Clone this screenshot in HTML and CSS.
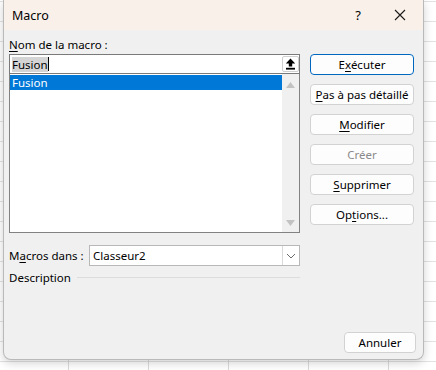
FILE: index.html
```html
<!DOCTYPE html>
<html lang="fr">
<head>
<meta charset="utf-8">
<title>Macro</title>
<link rel="stylesheet" href="styles.css">
</head>
<body>
<div class="dialog">
  <div class="titlebar">
    <span class="title">Macro</span>
    <span class="help">?</span>
    <span class="close"><svg width="12" height="12" viewBox="0 0 12 12"><path d="M1 1L11 11M11 1L1 11" stroke="#1a1a1a" stroke-width="1.1" fill="none"/></svg></span>
  </div>
  <div class="content">
    <div class="main">
      <div class="left">
        <div class="label"><u>N</u>om de la macro :</div>
        <div class="namebox">
          <span class="nametext"><span class="sel">Fusion</span><span class="caret"></span></span>
          <span class="upbtn"><svg width="11" height="12" viewBox="0 0 11 12"><path d="M5.5 0.5L0.8 5.6H3.8V8.6H7.2V5.6H10.2Z" fill="#000"/><rect x="1" y="9.8" width="9" height="1.8" fill="#000"/></svg></span>
        </div>
        <div class="list">
          <div class="items">
            <div class="item selected">Fusion</div>
          </div>
          <div class="scrollbar">
            <svg width="9" height="6" viewBox="0 0 9 6"><path d="M4.5 0L9 6H0Z" fill="#c2c2c2"/></svg>
            <svg width="9" height="6" viewBox="0 0 9 6"><path d="M0 0H9L4.5 6Z" fill="#c2c2c2"/></svg>
          </div>
        </div>
        <div class="macrosin">
          <span class="mlabel">M<u>a</u>cros dans :</span>
          <div class="combo">
            <span class="combotext">Classeur2</span>
            <span class="chev"><svg width="10" height="6" viewBox="0 0 10 6"><path d="M1 1L5 5L9 1" stroke="#6d6d6d" stroke-width="1" fill="none"/></svg></span>
          </div>
        </div>
        <div class="desc">
          <span>Description</span>
          <span class="rule"></span>
        </div>
      </div>
      <div class="buttons">
        <button class="btn default">E<u>x</u>écuter</button>
        <button class="btn"><u>P</u>as à pas détaillé</button>
        <button class="btn"><u>M</u>odifier</button>
        <button class="btn disabled">Créer</button>
        <button class="btn"><u>S</u>upprimer</button>
        <button class="btn">Op<u>t</u>ions...</button>
      </div>
    </div>
    <div class="footer">
      <button class="btn cancel">Annuler</button>
    </div>
  </div>
</div>
</body>
</html>
```
FILE: styles.css
```css
html, body {
  margin: 0;
  padding: 0;
}
body {
  width: 436px;
  height: 370px;
  overflow: hidden;
  font-family: "Noto Sans", "Open Sans", sans-serif;
  font-size: 11.5px;
  color: #000;
  background-color: #fff;
  background-image:
    linear-gradient(to right, #dadada 1px, transparent 1px),
    linear-gradient(to bottom, #e2e2e2 1px, transparent 1px);
  background-size: 80px 20px, 80px 20px;
  background-position: 68px 0, 0 1px;
}
.dialog {
  margin-left: 3px;
  width: 419px;
  height: 359px;
  border: 1px solid #b9b9b9;
  border-top: none;
  border-radius: 0 0 8px 8px;
  background: #f0f0f0;
  box-shadow: 0 3px 10px rgba(0,0,0,0.18);
  overflow: hidden;
  display: flex;
  flex-direction: column;
}
.titlebar {
  height: 30px;
  flex: none;
  background: #f9f0ea;
  display: flex;
  align-items: center;
}
.title {
  padding-left: 8px;
  font-size: 12.5px;
  flex: 1;
}
.help {
  width: 20px;
  text-align: center;
  font-size: 13px;
  margin-right: 26px;
}
.close {
  width: 12px;
  height: 12px;
  display: flex;
  margin-right: 17px;
}
.content {
  flex: 1;
  display: flex;
  flex-direction: column;
  padding: 8px 7px 6px 5px;
}
.main {
  display: flex;
  gap: 10px;
}
.left {
  width: 291px;
  display: flex;
  flex-direction: column;
}
.label {
  height: 16px;
  line-height: 14px;
}
u {
  text-decoration-thickness: 1px;
  text-underline-offset: 2px;
}
.namebox {
  height: 18px;
  border: 1px solid #7a7a7a;
  background: #fff;
  display: flex;
  align-items: center;
}
.nametext {
  flex: 1;
  padding-left: 2px;
  display: flex;
  align-items: center;
}
.sel {
  background: #d4d4d4;
  line-height: 15px;
}
.caret {
  width: 1px;
  height: 14px;
  background: #000;
}
.upbtn {
  width: 17px;
  height: 16px;
  margin-right: 0;
  box-sizing: border-box;
  border: 1px solid #cfcfcf;
  border-radius: 2px;
  background: #fff;
  display: flex;
  align-items: center;
  justify-content: center;
}
.list {
  height: 158px;
  border: 1px solid #828282;
  border-top: none;
  background: #fff;
  display: flex;
}
.items {
  flex: 1;
  padding-top: 1px;
}
.item {
  height: 15px;
  line-height: 15px;
  padding-left: 2px;
}
.item.selected {
  background: #0078d7;
  color: #fff;
}
.scrollbar {
  width: 17px;
  background: #f0f0f0;
  display: flex;
  flex-direction: column;
  justify-content: space-between;
  align-items: center;
  padding: 8px 0 6px;
}
.macrosin {
  margin-top: 12px;
  height: 21px;
  display: flex;
  align-items: center;
}
.mlabel {
  width: 80px;
}
.combo {
  flex: 1;
  height: 19px;
  border: 1px solid #b8b8b8;
  background: #fff;
  display: flex;
  align-items: center;
}
.combotext {
  flex: 1;
  padding-left: 3px;
}
.chev {
  width: 16px;
  height: 19px;
  border-left: 1px solid #d9d9d9;
  display: flex;
  align-items: center;
  justify-content: center;
}
.desc {
  margin-top: 2px;
  height: 18px;
  display: flex;
  align-items: center;
  gap: 6px;
}
.rule {
  flex: 1;
  height: 1px;
  background: #dcdcdc;
}
.buttons {
  width: 104px;
  padding-top: 16px;
  display: flex;
  flex-direction: column;
  gap: 9px;
}
.btn {
  height: 21px;
  box-sizing: border-box;
  border: 1px solid #d2d2d2;
  border-radius: 4px;
  background: #fdfdfd;
  font-family: inherit;
  font-size: 11.5px;
  color: #000;
  padding: 0;
  line-height: 18px;
}
.btn.default {
  border: 1.5px solid #0067c0;
}
.btn.disabled {
  color: #8a8a8a;
}
.footer {
  margin-top: auto;
  display: flex;
  justify-content: flex-end;
}
.btn.cancel {
  width: 72px;
}
```
